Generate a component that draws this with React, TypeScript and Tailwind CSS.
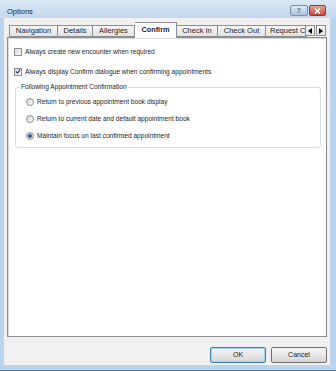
const tabs = [
  { label: "Navigation", w: "w-[49px]" },
  { label: "Details", w: "w-[35px]" },
  { label: "Allergies", w: "w-[42px]" },
  { label: "Confirm", w: "w-[42px]", active: true },
  { label: "Check In", w: "w-[41px]" },
  { label: "Check Out", w: "w-[48px]" },
  { label: "Request C", w: "w-[41px]" },
];

function CheckBox({ checked }: { checked?: boolean }) {
  return (
    <div className="w-[8px] h-[8px] border border-[#8e8f8f] bg-gradient-to-br from-[#d9d9d9] to-[#f7f7f7] flex items-center justify-center shrink-0">
      {checked && (
        <svg width="7" height="7" viewBox="0 0 7 7">
          <path d="M1 3.5 L3 5.5 L6 1" stroke="#2b3f6b" strokeWidth="1.3" fill="none" />
        </svg>
      )}
    </div>
  );
}

function Radio({ checked }: { checked?: boolean }) {
  return (
    <div className="w-[8px] h-[8px] rounded-full border border-[#8e8f8f] bg-gradient-to-br from-[#d6d6d6] to-[#f8f8f8] flex items-center justify-center shrink-0">
      {checked && <div className="w-[4px] h-[4px] rounded-full bg-[#27548a]" />}
    </div>
  );
}

function Btn({ label, primary }: { label: string; primary?: boolean }) {
  return (
    <div
      className={
        "w-[56px] h-[16px] rounded-[2px] border flex items-center justify-center text-[7px] text-[#1a1a1a] bg-gradient-to-b from-[#f3f3f3] via-[#e8e8e8] to-[#d4d4d4] " +
        (primary ? "border-[#3c7fb1] shadow-[inset_0_0_0_1px_#a6d3f2]" : "border-[#707070]")
      }
    >
      {label}
    </div>
  );
}

export default function App() {
  return (
    <div className="w-[336px] h-[371px] bg-[#bcd3ed] flex flex-col border-b border-[#5a7491] font-['Liberation_Sans',Arial,sans-serif] text-[#1e1e1e]">
      <div className="h-[18px] flex justify-between bg-gradient-to-b from-[#dbe8f6] to-[#c3d7ee] pl-[7px] pr-[10px]">
        <span className="text-[7.5px] mt-[7px] leading-[9px] text-[#1b1b1b]">Options</span>
        <div className="flex gap-[1px] mt-[5px]">
          <div className="w-[18px] h-[11px] rounded-[2px] border border-[#7a90ad] bg-gradient-to-b from-[#dfe9f5] to-[#a9bfdc] flex items-center justify-center text-[7px] font-bold text-[#5b6f8a] leading-none">
            ?
          </div>
          <div className="w-[17px] h-[11px] rounded-[2px] border border-[#8a3a32] bg-gradient-to-b from-[#e8a293] to-[#c24a39] flex items-center justify-center">
            <svg width="7" height="6" viewBox="0 0 7 6">
              <path d="M1 0.5 L6 5.5 M6 0.5 L1 5.5" stroke="white" strokeWidth="1.6" />
            </svg>
          </div>
        </div>
      </div>

      <div className="flex-1 ml-[4px] mr-[6px] mb-[5px] bg-[#f0f0f0] flex flex-col pl-[3px] pr-[3px] pt-[4px]">
        <div className="h-[15px] flex items-end pl-[2px] relative">
          {tabs.map((t, i) => (
            <div
              key={t.label}
              className={
                t.w +
                " border-t border-r border-[#8c8e94] flex items-center justify-center whitespace-nowrap leading-none " +
                (i === 0 ? "border-l " : "") +
                (t.active
                  ? "h-[16px] -mb-px bg-white relative z-10 font-bold text-[7.3px] pb-[2px]"
                  : "h-[12px] bg-gradient-to-b from-[#f6f6f6] to-[#e2e2e2] text-[7.5px] border-b")
              }
            >
              <span className={t.label === "Request C" ? "pl-[4px] w-full text-left" : ""}>{t.label}</span>
            </div>
          ))}
          <div className="absolute right-[1px] bottom-[1px] flex gap-[1px]">
            <div className="w-[10px] h-[11px] border border-[#8c8e94] bg-gradient-to-b from-[#f7f7f7] to-[#e4e4e4] flex items-center justify-center">
              <svg width="4" height="6" viewBox="0 0 4 6">
                <path d="M4 0 L0 3 L4 6 Z" fill="#000" />
              </svg>
            </div>
            <div className="w-[10px] h-[11px] border border-[#8c8e94] bg-gradient-to-b from-[#f7f7f7] to-[#e4e4e4] flex items-center justify-center">
              <svg width="4" height="6" viewBox="0 0 4 6">
                <path d="M0 0 L4 3 L0 6 Z" fill="#000" />
              </svg>
            </div>
          </div>
        </div>

        <div className="h-[300px] bg-white border border-[#8c8e94] shadow-[inset_1px_1px_0_#d9d9d9] pl-[6px] pr-[5px] pt-[9px] text-[6.6px] leading-[8px]">
          <div className="flex items-center gap-[3px] h-[9px]">
            <CheckBox />
            <span>Always create new encounter when required</span>
          </div>
          <div className="flex items-center gap-[3px] h-[9px] mt-[11px]">
            <CheckBox checked />
            <span>Always display Confirm dialogue when confirming appointments</span>
          </div>
          <div className="mt-[11px] ml-[1px] h-[61px] border border-[#d5dfe5] rounded-[3px] relative pl-[10px] pt-[9px]">
            <span className="absolute -top-[5px] left-[4px] bg-white px-[1px]">Following Appointment Confirmation</span>
            <div className="flex items-center gap-[3px] h-[9px]">
              <Radio />
              <span>Return to previous appointment book display</span>
            </div>
            <div className="flex items-center gap-[3px] h-[9px] mt-[8px]">
              <Radio />
              <span>Return to current date and default appointment book</span>
            </div>
            <div className="flex items-center gap-[3px] h-[9px] mt-[8px]">
              <Radio checked />
              <span>Maintain focus on last confirmed appointment</span>
            </div>
          </div>
        </div>

        <div className="flex justify-end gap-[5px] mt-[10px]">
          <Btn label="OK" primary />
          <Btn label="Cancel" />
        </div>
      </div>
    </div>
  );
}
